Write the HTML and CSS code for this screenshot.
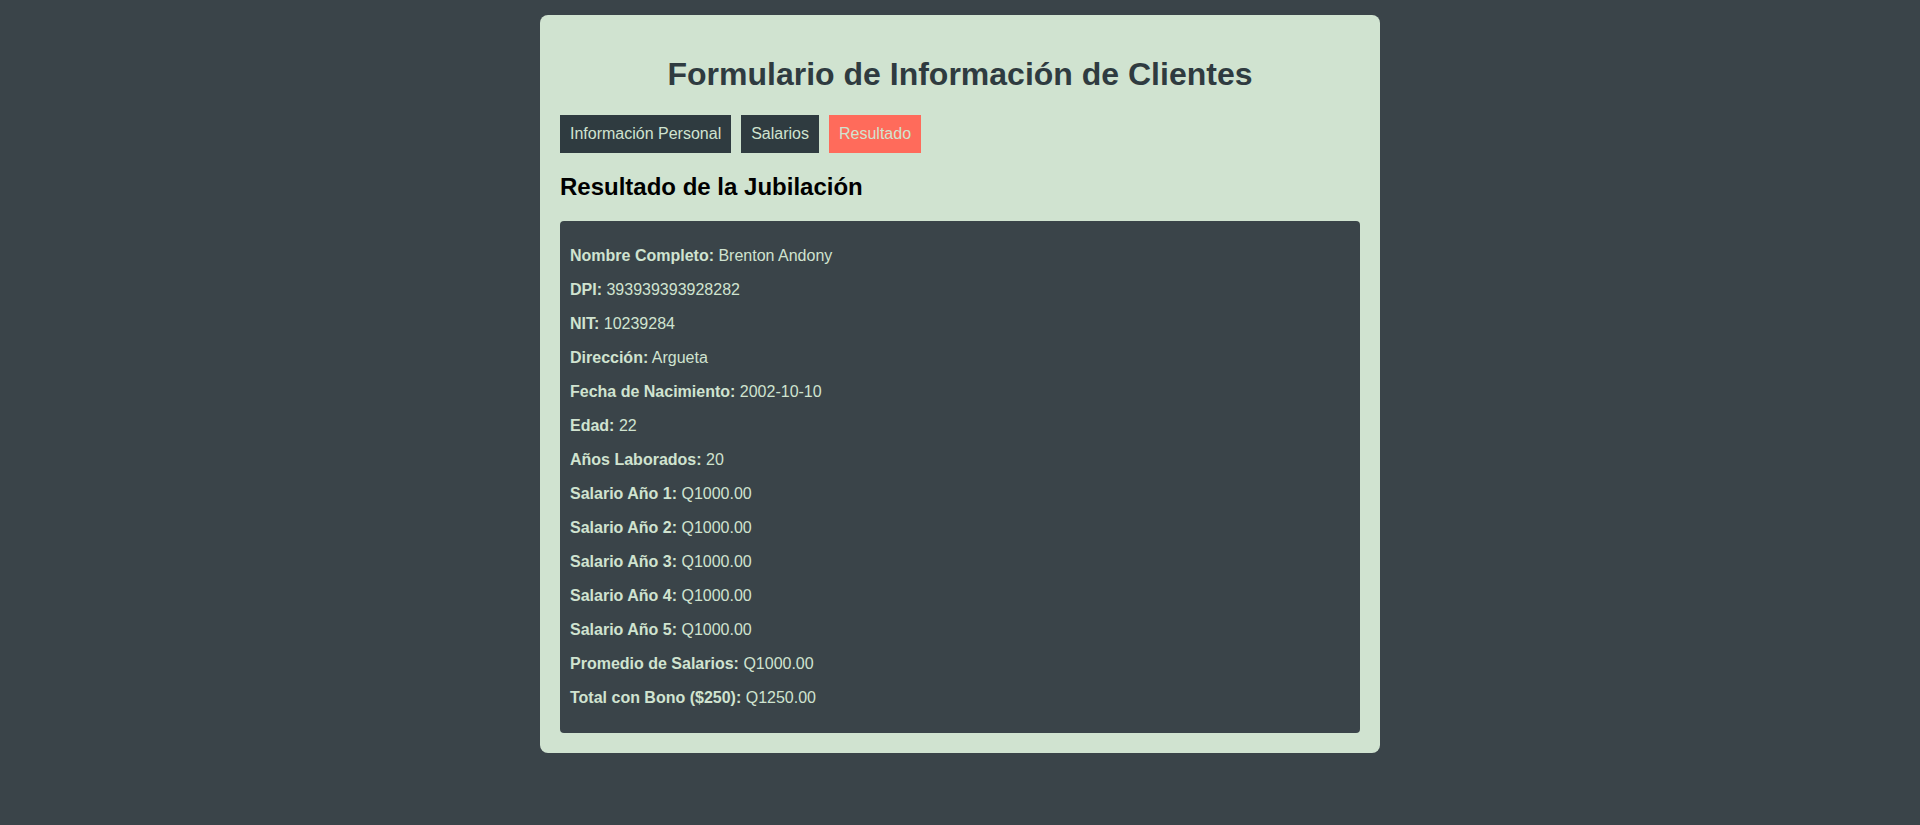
FILE: index.html
```html
<!DOCTYPE html>
<html lang="es">
<head>
<meta charset="utf-8">
<title>Formulario de Información de Clientes</title>
<link rel="stylesheet" href="styles.css">
</head>
<body>
<div class="container">
  <h1 class="title">Formulario de Información de Clientes</h1>
  <div class="tabs">
    <button class="tab">Información Personal</button>
    <button class="tab">Salarios</button>
    <button class="tab active">Resultado</button>
  </div>
  <h2 class="subtitle">Resultado de la Jubilación</h2>
  <div class="result">
    <p><strong>Nombre Completo:</strong> Brenton Andony</p>
    <p><strong>DPI:</strong> 393939393928282</p>
    <p><strong>NIT:</strong> 10239284</p>
    <p><strong>Dirección:</strong> Argueta</p>
    <p><strong>Fecha de Nacimiento:</strong> 2002-10-10</p>
    <p><strong>Edad:</strong> 22</p>
    <p><strong>Años Laborados:</strong> 20</p>
    <p><strong>Salario Año 1:</strong> Q1000.00</p>
    <p><strong>Salario Año 2:</strong> Q1000.00</p>
    <p><strong>Salario Año 3:</strong> Q1000.00</p>
    <p><strong>Salario Año 4:</strong> Q1000.00</p>
    <p><strong>Salario Año 5:</strong> Q1000.00</p>
    <p><strong>Promedio de Salarios:</strong> Q1000.00</p>
    <p><strong>Total con Bono ($250):</strong> Q1250.00</p>
  </div>
</div>
</body>
</html>
```
FILE: styles.css
```css
html, body {
  margin: 0;
  padding: 0;
}
body {
  background: #3a4449;
  font-family: "Liberation Sans", Arial, sans-serif;
  padding-top: 15px;
}
.container {
  width: 800px;
  margin: 0 auto;
  padding: 20px;
  background: #d0e3d0;
  border-radius: 8px;
}
.title {
  font-size: 32px;
  margin: 0.67em 0;
  text-align: center;
  color: #2f3b40;
}
.tabs {
  display: flex;
  gap: 10px;
}
.tab {
  font-family: "Liberation Sans", Arial, sans-serif;
  font-size: 16px;
  padding: 10px;
  border: none;
  background: #2f3b40;
  color: #d0e3d0;
  cursor: pointer;
}
.tab.active {
  background: #ff6b5b;
}
.subtitle {
  font-size: 24px;
  margin: 0.83em 0;
  color: #000;
}
.result {
  background: #3a4449;
  color: #d0e3d0;
  padding: 10px;
  border-radius: 4px;
}
.result p {
  margin: 16px 0;
  font-size: 16px;
  line-height: 18px;
}
```
